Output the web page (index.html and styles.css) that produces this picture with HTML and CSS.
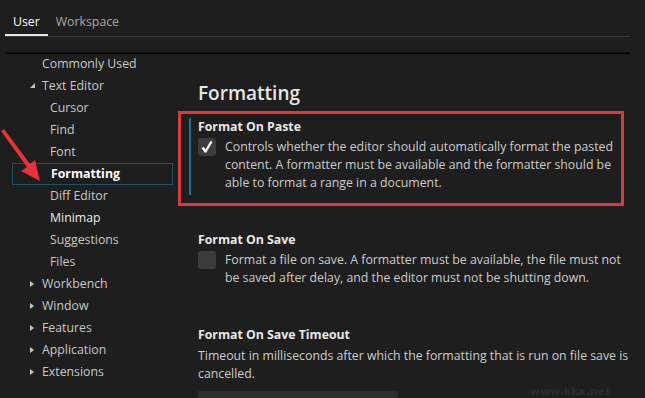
FILE: index.html
```html
<!DOCTYPE html>
<html lang="en">
<head>
  <meta charset="UTF-8" />
  <title>Settings</title>
  <link rel="stylesheet" href="styles.css">
</head>
<body>

  <div class="tabs">
    <div class="tab active">User</div>
    <div class="tab">Workspace</div>
  </div>

  <div class="settings">
    <!-- left tree -->
    <ul class="toc">
      <li class="row">Commonly Used</li>
      <li class="row"><span class="twisty open"></span>Text Editor</li>
      <li class="row child">Cursor</li>
      <li class="row child">Find</li>
      <li class="row child">Font</li>
      <li class="row child selected">Formatting</li>
      <li class="row child">Diff Editor</li>
      <li class="row child strong">Minimap</li>
      <li class="row child">Suggestions</li>
      <li class="row child">Files</li>
      <li class="row"><span class="twisty"></span>Workbench</li>
      <li class="row"><span class="twisty"></span>Window</li>
      <li class="row"><span class="twisty"></span>Features</li>
      <li class="row"><span class="twisty"></span>Application</li>
      <li class="row"><span class="twisty"></span>Extensions</li>
    </ul>

    <!-- settings list -->
    <div class="main">
      <h2>Formatting</h2>

      <div class="item focused">
        <div class="item-title">Format On Paste</div>
        <div class="item-body">
          <span class="check on">
            <svg width="18" height="18" viewBox="0 0 18 18"><path d="M4.5 9.5 L7.5 13.5 L13.5 3.5" fill="none" stroke="#ffffff" stroke-width="2.4" stroke-linejoin="round"/></svg>
          </span>
          <p>Controls whether the editor should automatically format the pasted content. A formatter must be available and the formatter should be able to format a range in a document.</p>
        </div>
      </div>

      <div class="item">
        <div class="item-title">Format On Save</div>
        <div class="item-body">
          <span class="check"></span>
          <p>Format a file on save. A formatter must be available, the file must not be saved after delay, and the editor must not be shutting down.</p>
        </div>
      </div>

      <div class="item">
        <div class="item-title">Format On Save Timeout</div>
        <p class="plain">Timeout in milliseconds after which the formatting that is run on file save is cancelled.</p>
        <div class="num-input"></div>
      </div>
    </div>
  </div>

  <!-- annotations -->
  <div class="mark-box"></div>
  <svg class="mark-arrow" width="50" height="60" viewBox="0 0 50 60">
    <polygon points="1,3 4,1 30,36 35,32 40,53 21,43 27,39" fill="#e8313a"/>
  </svg>
  <div class="watermark">www.kkx.net</div>

</body>
</html>
```

FILE: styles.css
```css
body {
  font-family: "Open Sans", "Noto Sans", sans-serif;
  font-size: 12.3px;
  background: #1e1e1e;
  color: #cccccc;
  margin: 0;
  width: 645px;
  height: 398px;
  overflow: hidden;
}

.tabs {
  display: flex;
  margin: 0 15px 0 5px;
  padding-top: 12px;
  border-bottom: 1px solid #3a3a3a;
}

.tab {
  padding: 0 8px 5px;
  line-height: 19px;
  color: #a8a8a8;
}

.tab.active {
  color: #ffffff;
  box-shadow: inset 0 -2px 0 #e8e8e8;
}

.settings {
  display: flex;
  margin-top: 15px;
  box-shadow: inset 0 2px 1px -1px #000000;
  border-top: 1px solid #111;
  margin-left: 5px;
  margin-right: 15px;
}

.toc {
  list-style: none;
  margin: 0;
  padding: 0;
  width: 168px;
}

.row {
  position: relative;
  height: 22px;
  line-height: 22px;
  padding-left: 37px;
  color: #c8c8c8;
  box-sizing: border-box;
}

.row.child {
  padding-left: 45px;
}

.row.selected {
  font-weight: 700;
  color: #ffffff;
  margin-left: 7px;
  padding-left: 38px;
  border: 1px solid #1f5266;
  line-height: 20px;
}

.row.strong {
  color: #ececec;
  font-weight: 500;
}

.twisty {
  position: absolute;
  left: 25px;
  top: 8px;
  width: 0;
  height: 0;
  border-top: 3px solid transparent;
  border-bottom: 3px solid transparent;
  border-left: 4px solid #c5c5c5;
}

.twisty.open {
  top: 8px;
  border-top: 0;
  border-bottom: 5px solid #c5c5c5;
  border-left: 5px solid transparent;
}

.main {
  flex: 1;
  padding-left: 16px;
}

h2 {
  font-size: 19px;
  font-weight: 600;
  color: #e6e6e6;
  margin: 27px 0 12px 9px;
  line-height: 26px;
}

.item {
  padding: 2px 0 3px 7px;
  border-left: 2px solid transparent;
  margin-bottom: 36px;
}

.item.focused {
  border-left-color: #1d7393;
}

.item-title {
  font-weight: 700;
  color: #e8e8e8;
  line-height: 18px;
  margin-bottom: 2px;
  margin-top: -2px;
}

.item-body {
  display: flex;
  gap: 9px;
}

.check {
  flex: none;
  width: 18px;
  height: 18px;
  border-radius: 3px;
  background: #3c3c3c;
}

p {
  margin: 0;
  line-height: 18px;
  color: #cccccc;
}

p.plain {
  margin-top: 3px;
}

.num-input {
  margin-top: 8px;
  width: 200px;
  height: 26px;
  background: #2d2d2d;
}

.mark-box {
  position: absolute;
  left: 178px;
  top: 111px;
  width: 440px;
  height: 89px;
  border: 3px solid #d93a3e;
}

.mark-arrow {
  position: absolute;
  left: 0;
  top: 128px;
}

.watermark {
  position: absolute;
  left: 530px;
  top: 385px;
  font-family: "DejaVu Sans", sans-serif;
  font-weight: 700;
  font-size: 11px;
  color: #2b2b2b;
}
```
